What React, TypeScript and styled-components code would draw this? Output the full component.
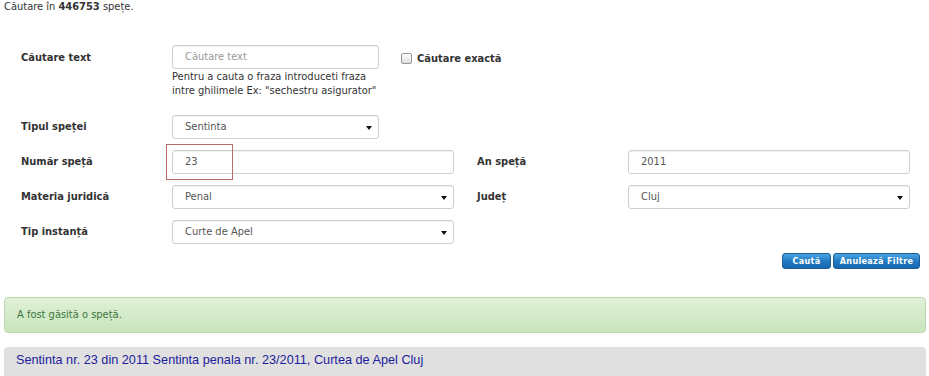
import styled, { createGlobalStyle } from "styled-components";

const GlobalStyle = createGlobalStyle`
  body {
    margin: 0;
    background: #fff;
    font-family: "DejaVu Sans Condensed", "DejaVu Sans", Verdana, sans-serif;
    font-size: 11px;
    color: #333;
  }
`;

const Page = styled.div`
  width: 922px;
  padding: 0 3px 0 4px;
`;

const Count = styled.div`
  height: 14px;
  line-height: 14px;
  b {
    font-weight: bold;
  }
`;

const Form = styled.div`
  padding: 31px 0 0 17px;
  display: grid;
  grid-template-columns: 151px 282px 23px 151px 282px;
  row-gap: 11px;
  align-items: center;
`;

const Label = styled.div`
  font-weight: bold;
  color: #333;
  line-height: 24px;
`;

const TextRow = styled.div`
  grid-column: 2 / 6;
  display: flex;
  align-items: flex-start;
  gap: 22px;
  margin-bottom: 6px;
`;

const Label1 = styled(Label)`
  align-self: start;
  margin-top: 1px;
`;

const Help = styled.div`
  line-height: 14px;
  margin-top: 1px;
`;

const Field = styled.div<{ $w?: number; $muted?: boolean }>`
  position: relative;
  box-sizing: border-box;
  width: ${(p) => (p.$w ? `${p.$w}px` : "100%")};
  height: 24px;
  line-height: 22px;
  padding: 0 12px;
  border: 1px solid #cfcfcf;
  border-radius: 3px;
  box-shadow: inset 0 1px 1px rgba(0, 0, 0, 0.06);
  color: ${(p) => (p.$muted ? "#999" : "#555")};
  background: #fff;
`;

const Arrow = styled.span`
  position: absolute;
  right: 6px;
  top: 10px;
  width: 0;
  height: 0;
  border-left: 3px solid transparent;
  border-right: 3px solid transparent;
  border-top: 4px solid #111;
`;

const Check = styled.label`
  display: flex;
  align-items: center;
  gap: 5px;
  font-weight: bold;
  height: 24px;
  margin-top: 1px;
`;

const Box = styled.span`
  width: 9px;
  height: 9px;
  border: 1px solid #999;
  border-radius: 2px;
  background: linear-gradient(#fff, #ddd);
`;

const Marked = styled.div`
  position: relative;
`;

const Highlight = styled.span`
  position: absolute;
  left: -6px;
  top: -6px;
  width: 65px;
  height: 34px;
  border: 1px solid #b86a6a;
`;

const Actions = styled.div`
  display: flex;
  justify-content: flex-end;
  gap: 2px;
  padding: 9px 6px 0 0;
`;

const Button = styled.button<{ $w: number }>`
  width: ${(p) => p.$w}px;
  height: 16px;
  padding: 0;
  border: 1px solid #1b5f95;
  border-radius: 3px;
  background: linear-gradient(#4aa3e0, #1f78c1 55%, #1667ac);
  color: #fff;
  font-family: "DejaVu Sans Condensed", "DejaVu Sans", Verdana, sans-serif;
  font-size: 9px;
  font-weight: bold;
  line-height: 14px;
  letter-spacing: 0.3px;
`;

const Alert = styled.div`
  margin-top: 28px;
  height: 36px;
  box-sizing: border-box;
  line-height: 34px;
  padding: 0 12px;
  border: 1px solid #bcd9ae;
  border-radius: 4px;
  background: linear-gradient(#dff0d8, #c8e5bc);
  color: #3c763d;
`;

const Result = styled.div`
  margin-top: 14px;
  height: 40px;
  padding: 6px 12px 0;
  box-sizing: border-box;
  border-radius: 4px 4px 0 0;
  background: #e0e0e0;
  font-family: "Liberation Sans", Arial, sans-serif;
  font-size: 12.7px;
  color: #1c1c9c;
`;

export default function App() {
  return (
    <>
      <GlobalStyle />
      <Page>
        <Count>
          Căutare în <b>446753</b> spețe.
        </Count>
        <Form>
          <Label1>Căutare text</Label1>
          <TextRow>
            <div>
              <Field $w={207} $muted>
                Căutare text
              </Field>
              <Help>
                Pentru a cauta o fraza introduceti fraza
                <br />
                intre ghilimele Ex: "sechestru asigurator"
              </Help>
            </div>
            <Check>
              <Box />
              Căutare exactă
            </Check>
          </TextRow>

          <Label>Tipul speței</Label>
          <Field $w={207}>
            Sentinta
            <Arrow />
          </Field>
          <span />
          <span />
          <span />

          <Label>Număr speță</Label>
          <Marked>
            <Field>23</Field>
            <Highlight />
          </Marked>
          <span />
          <Label>An speță</Label>
          <Field>2011</Field>

          <Label>Materia juridică</Label>
          <Field>
            Penal
            <Arrow />
          </Field>
          <span />
          <Label>Județ</Label>
          <Field>
            Cluj
            <Arrow />
          </Field>

          <Label>Tip instanță</Label>
          <Field>
            Curte de Apel
            <Arrow />
          </Field>
        </Form>
        <Actions>
          <Button $w={49}>Caută</Button>
          <Button $w={87}>Anulează Filtre</Button>
        </Actions>
        <Alert>A fost găsită o speță.</Alert>
        <Result>Sentinta nr. 23 din 2011 Sentinta penala nr. 23/2011, Curtea de Apel Cluj</Result>
      </Page>
    </>
  );
}
